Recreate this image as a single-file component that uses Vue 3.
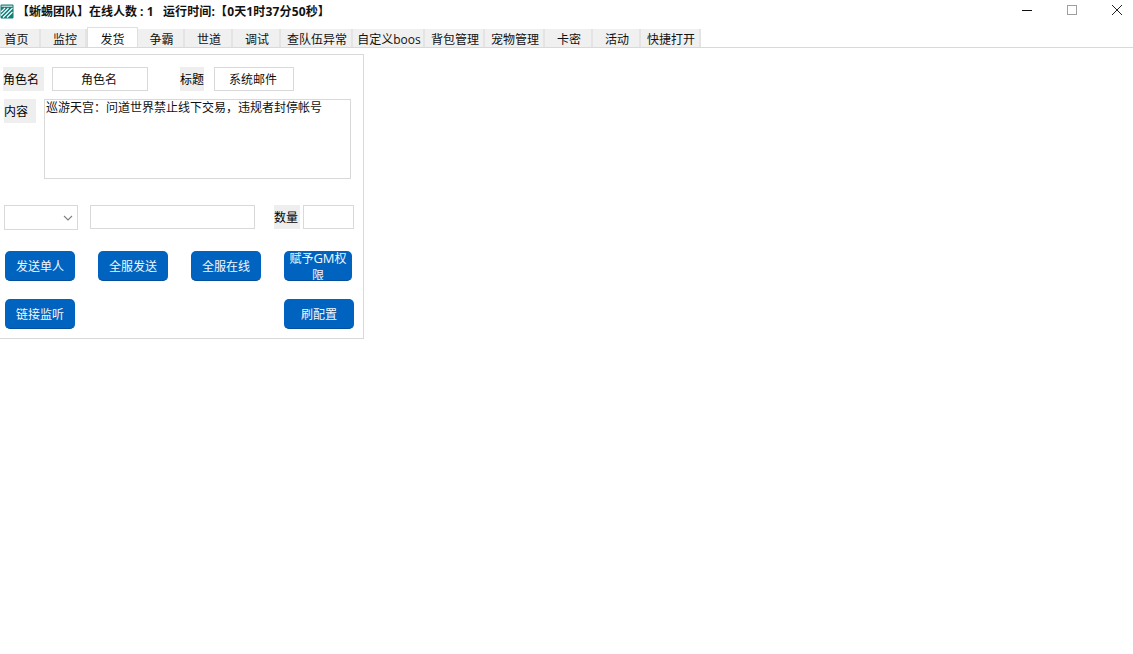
<script setup>
const tabs = [
  { label: '首页', width: 41, cls: 'first' },
  { label: '监控', width: 46, cls: 'second' },
  { label: '发货', width: 51, active: true },
  { label: '争霸', width: 47 },
  { label: '世道', width: 48 },
  { label: '调试', width: 48 },
  { label: '查队伍异常', width: 72 },
  { label: '自定义boos', width: 72 },
  { label: '背包管理', width: 60 },
  { label: '宠物管理', width: 60 },
  { label: '卡密', width: 48 },
  { label: '活动', width: 48 },
  { label: '快捷打开', width: 60 }
]
</script>

<template>
  <div class="app">
    <header class="titlebar">
      <svg class="logo" width="14" height="15" viewBox="0 0 14 15">
        <rect x="0.5" y="0.5" width="13" height="14" rx="1" fill="#0f7f7c" />
        <path d="M1.5 2.2H12.5" stroke="#fff" stroke-width="1" />
        <path d="M1 8 L5 4 M1 11.5 L8.5 4 M3 13.5 L12.5 4 M7 13.5 L12.5 8" stroke="#fff" stroke-width="1.1" fill="none" />
      </svg>
      <span class="title">【蜥蜴团队】在线人数 : 1&nbsp;&nbsp;&nbsp;<span class="uptime">运行时间:【0天1时37分50秒】</span></span>
      <div class="winctrls">
        <svg width="12" height="12" viewBox="0 0 12 12"><path d="M1 6.5H11" stroke="#111" /></svg>
        <svg width="12" height="12" viewBox="0 0 12 12"><rect x="1.5" y="1.5" width="9" height="9" fill="none" stroke="#a0a0a0" /></svg>
        <svg width="12" height="12" viewBox="0 0 12 12"><path d="M1 1L11 11M11 1L1 11" stroke="#222" /></svg>
      </div>
    </header>

    <nav class="tabs">
      <div
        v-for="t in tabs"
        :key="t.label"
        class="tab"
        :class="[t.cls, { active: t.active }]"
        :style="{ width: t.width + 'px' }"
      >{{ t.label }}</div>
    </nav>

    <section class="panel">
      <div class="row row1">
        <span class="label l1">角色名</span>
        <div class="field f1">角色名</div>
        <span class="label l2">标题</span>
        <div class="field f2">系统邮件</div>
      </div>
      <div class="row row2">
        <span class="label l3">内容</span>
        <div class="textarea">巡游天宫：问道世界禁止线下交易，违规者封停帐号</div>
      </div>
      <div class="row row3">
        <div class="select">
          <svg width="10" height="6" viewBox="0 0 10 6"><path d="M1 1L5 5L9 1" fill="none" stroke="#808080" stroke-width="1.1" /></svg>
        </div>
        <div class="field f3"></div>
        <span class="label l4">数量</span>
        <div class="field f4"></div>
      </div>
      <div class="row row4">
        <button class="btn">发送单人</button>
        <button class="btn">全服发送</button>
        <button class="btn">全服在线</button>
        <button class="btn narrow"><span class="btn-clip">赋予<span class="gm">GM</span>权限</span></button>
      </div>
      <div class="row row5">
        <button class="btn">链接监听</button>
        <button class="btn">刷配置</button>
      </div>
    </section>
  </div>
</template>

<style>
html, body { margin: 0; background: #fff; }
</style>

<style scoped>
.app {
  width: 1133px;
  height: 654px;
  overflow: hidden;
  background: #fff;
  color: #111;
  font-family: "Open Sans", "Noto Sans CJK SC", sans-serif;
  font-size: 12px;
}
.titlebar {
  height: 29px;
  display: flex;
  align-items: flex-start;
}
.logo { margin: 4px 0 0 0; flex: none; }
.title {
  margin: 3px 0 0 3px;
  font-size: 12px;
  font-weight: 700;
  line-height: 18px;
  white-space: nowrap;
}
.uptime { letter-spacing: 0.15px; }
.winctrls {
  margin-left: auto;
  display: flex;
  gap: 33px;
  padding: 4px 10px 0 0;
}
.tabs {
  display: flex;
  height: 18px;
  border-bottom: 1px solid #d9d9d9;
}
.tab {
  box-sizing: border-box;
  height: 18px;
  padding-left: 2px;
  background: #f0f0f0;
  border-right: 2px solid #e4e4e4;
  text-align: center;
  line-height: 21px;
  white-space: nowrap;
}
.tab.first { padding-left: 0; padding-right: 6px; }
.tab.second { padding-left: 4px; }
.tab.active {
  background: #fff;
  height: 20px;
  margin-top: -2px;
  padding-left: 0;
  line-height: 24px;
  border: 1px solid #e0e0e0;
  border-bottom: none;
  position: relative;
  z-index: 1;
}
.panel {
  box-sizing: border-box;
  width: 364px;
  height: 285px;
  margin-top: 6px;
  border: 1px solid #d9d9d9;
  border-left: none;
  padding-top: 12px;
}
.row { display: flex; align-items: flex-start; }
.label {
  background: #eee;
  height: 24px;
  line-height: 26px;
  font-size: 12px;
  color: #000;
  white-space: nowrap;
  flex: none;
}
.field {
  box-sizing: border-box;
  height: 24px;
  border: 1px solid #d9d9d9;
  text-align: center;
  line-height: 24px;
  flex: none;
  background: #fff;
}
.l1 { margin-left: 3px; width: 41px; }
.f1 { margin-left: 8px; width: 96px; padding-right: 2px; }
.l2 { margin-left: 32px; width: 24px; }
.f2 { margin-left: 10px; width: 80px; padding-right: 2px; }
.row2 { margin-top: 8px; }
.l3 { margin-left: 4px; width: 32px; }
.textarea {
  box-sizing: border-box;
  margin-left: 8px;
  width: 307px;
  height: 80px;
  border: 1px solid #d9d9d9;
  padding: 1px 0 0 1px;
  line-height: 14px;
  white-space: nowrap;
}
.row3 { margin-top: 26px; }
.select {
  box-sizing: border-box;
  margin-left: 4px;
  width: 74px;
  height: 25px;
  border: 1px solid #d9d9d9;
  display: flex;
  align-items: center;
  justify-content: flex-end;
  padding-right: 4px;
}
.f3 { margin-left: 12px; width: 165px; }
.l4 { margin-left: 19px; width: 26px; }
.f4 { margin-left: 3px; width: 51px; }
.row4 { margin-top: 21px; padding-left: 5px; gap: 23px; }
.row5 { margin-top: 18px; padding-left: 5px; gap: 209px; }
.btn {
  box-sizing: border-box;
  flex: none;
  width: 70px;
  height: 30px;
  padding: 2px 0 0;
  border: none;
  border-bottom: 1px solid #00509e;
  border-radius: 5px;
  background: #0063bf;
  color: #f4f8fc;
  font-family: inherit;
  font-size: 12px;
  line-height: 16px;
}
.narrow {
  width: 68px;
  padding: 0;
  overflow: hidden;
  line-height: 17px;
}
.btn-clip { display: block; width: 64px; margin: -1px auto 0; }
.gm { font-size: 13px; }
</style>
